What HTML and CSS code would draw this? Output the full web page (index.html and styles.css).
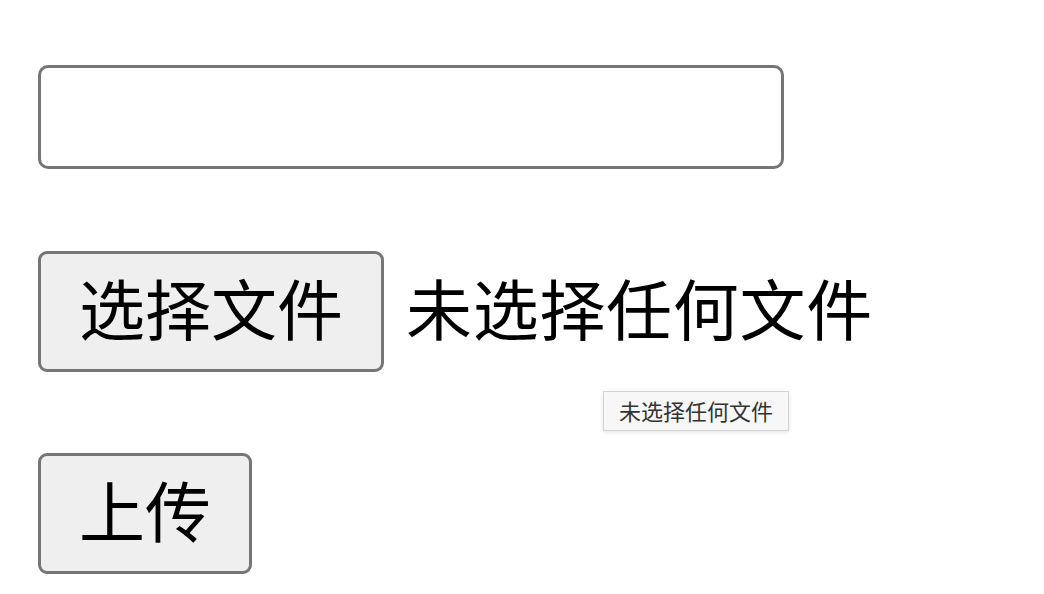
FILE: index.html
```html
<!DOCTYPE html>
<html lang="zh-CN">
<head>
<meta charset="utf-8">
<link rel="stylesheet" href="styles.css">
</head>
<body>
<form class="page">
  <input class="text-field" type="text">
  <div class="file-row">
    <button type="button" class="btn btn-file">选择文件</button>
    <span class="file-status">未选择任何文件</span>
  </div>
  <div class="upload-row">
    <button type="button" class="btn btn-upload">上传</button>
  </div>
  <div class="tooltip">未选择任何文件</div>
</form>
</body>
</html>
```
FILE: styles.css
```css
html, body {
  margin: 0;
  padding: 0;
  background: #ffffff;
}
body {
  font-family: "Noto Sans CJK SC", "Noto Sans", sans-serif;
  color: #000;
}
.page {
  position: relative;
  display: flex;
  flex-direction: column;
  align-items: flex-start;
  padding: 65px 0 0 38px;
  margin: 0;
}
.text-field {
  box-sizing: border-box;
  width: 746px;
  height: 104px;
  border: 3px solid #767676;
  border-radius: 10px;
  background: #fff;
  margin: 0;
  padding: 0 10px;
  font: inherit;
  outline: none;
}
.file-row {
  display: flex;
  align-items: center;
  gap: 22px;
  margin-top: 82px;
}
.btn {
  box-sizing: border-box;
  height: 121px;
  border: 3px solid #767676;
  border-radius: 9px;
  background: #efefef;
  color: #000;
  font-family: "Noto Sans CJK SC", sans-serif;
  font-size: 66px;
  font-weight: 400;
  line-height: 1;
  margin: 0;
  display: flex;
  align-items: center;
  justify-content: center;
}
.btn-file {
  width: 346px;
  padding: 0 0 12px 0;
}
.file-status {
  font-size: 66px;
  font-weight: 400;
  line-height: 1;
  padding-bottom: 12px;
  letter-spacing: 0.7px;
}
.upload-row {
  margin-top: 81px;
}
.btn-upload {
  width: 214px;
  padding: 0 0 12px 0;
}
.tooltip {
  position: absolute;
  left: 603px;
  top: 391px;
  box-sizing: border-box;
  width: 186px;
  height: 40px;
  background: #f7f7f7;
  border: 1px solid #d4d4d4;
  box-shadow: 0 1px 4px rgba(0,0,0,0.12);
  font-size: 22px;
  font-weight: 400;
  color: #333;
  display: flex;
  align-items: center;
  justify-content: center;
  padding-bottom: 2px;
}
```
